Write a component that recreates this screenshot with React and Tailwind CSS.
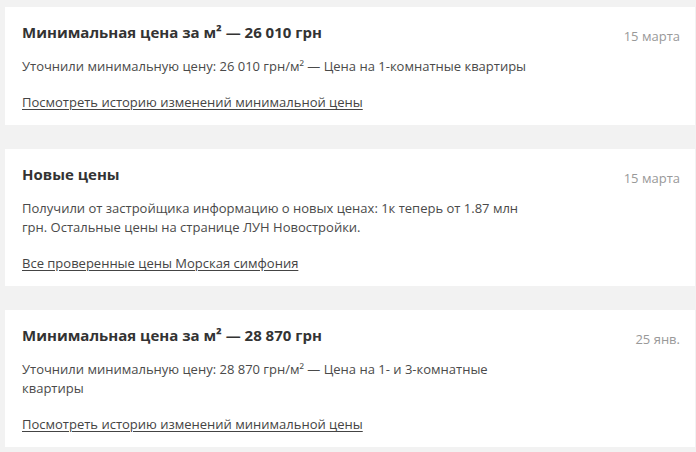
import React from "react";

const items = [
  {
    title: "Минимальная цена за м² — 26 010 грн",
    date: "15 марта",
    body: "Уточнили минимальную цену: 26 010 грн/м² — Цена на 1-комнатные квартиры",
    link: "Посмотреть историю изменений минимальной цены",
  },
  {
    title: "Новые цены",
    date: "15 марта",
    body: "Получили от застройщика информацию о новых ценах: 1к теперь от 1.87 млн грн. Остальные цены на странице ЛУН Новостройки.",
    link: "Все проверенные цены Морская симфония",
  },
  {
    title: "Минимальная цена за м² — 28 870 грн",
    date: "25 янв.",
    body: "Уточнили минимальную цену: 28 870 грн/м² — Цена на 1- и 3-комнатные квартиры",
    link: "Посмотреть историю изменений минимальной цены",
  },
];

export default function App() {
  return (
    <div
      className="w-[696px] h-[452px] bg-[#f2f2f2] pt-[7px] pl-[5px] pr-[1px] flex flex-col gap-[24px] overflow-hidden"
      style={{ fontFamily: '"Open Sans", sans-serif' }}
    >
      {items.map((it, i) => (
        <div key={i} className="bg-white pl-[17px] pr-[15px] pt-[15px] pb-[14px]">
          <div className="flex justify-between items-start">
            <div className="text-[15px] leading-[20px] font-bold text-[#333333]">{it.title}</div>
            <div className="text-[13px] leading-[20px] text-[#999999] mt-[4px]">{it.date}</div>
          </div>
          <div className="mt-[11px] w-[515px] text-[13px] leading-[19px] text-[#4a4a4a]">{it.body}</div>
          <div className="mt-[18px] text-[13px] leading-[17px] text-[#444444] underline underline-offset-2">{it.link}</div>
        </div>
      ))}
    </div>
  );
}
